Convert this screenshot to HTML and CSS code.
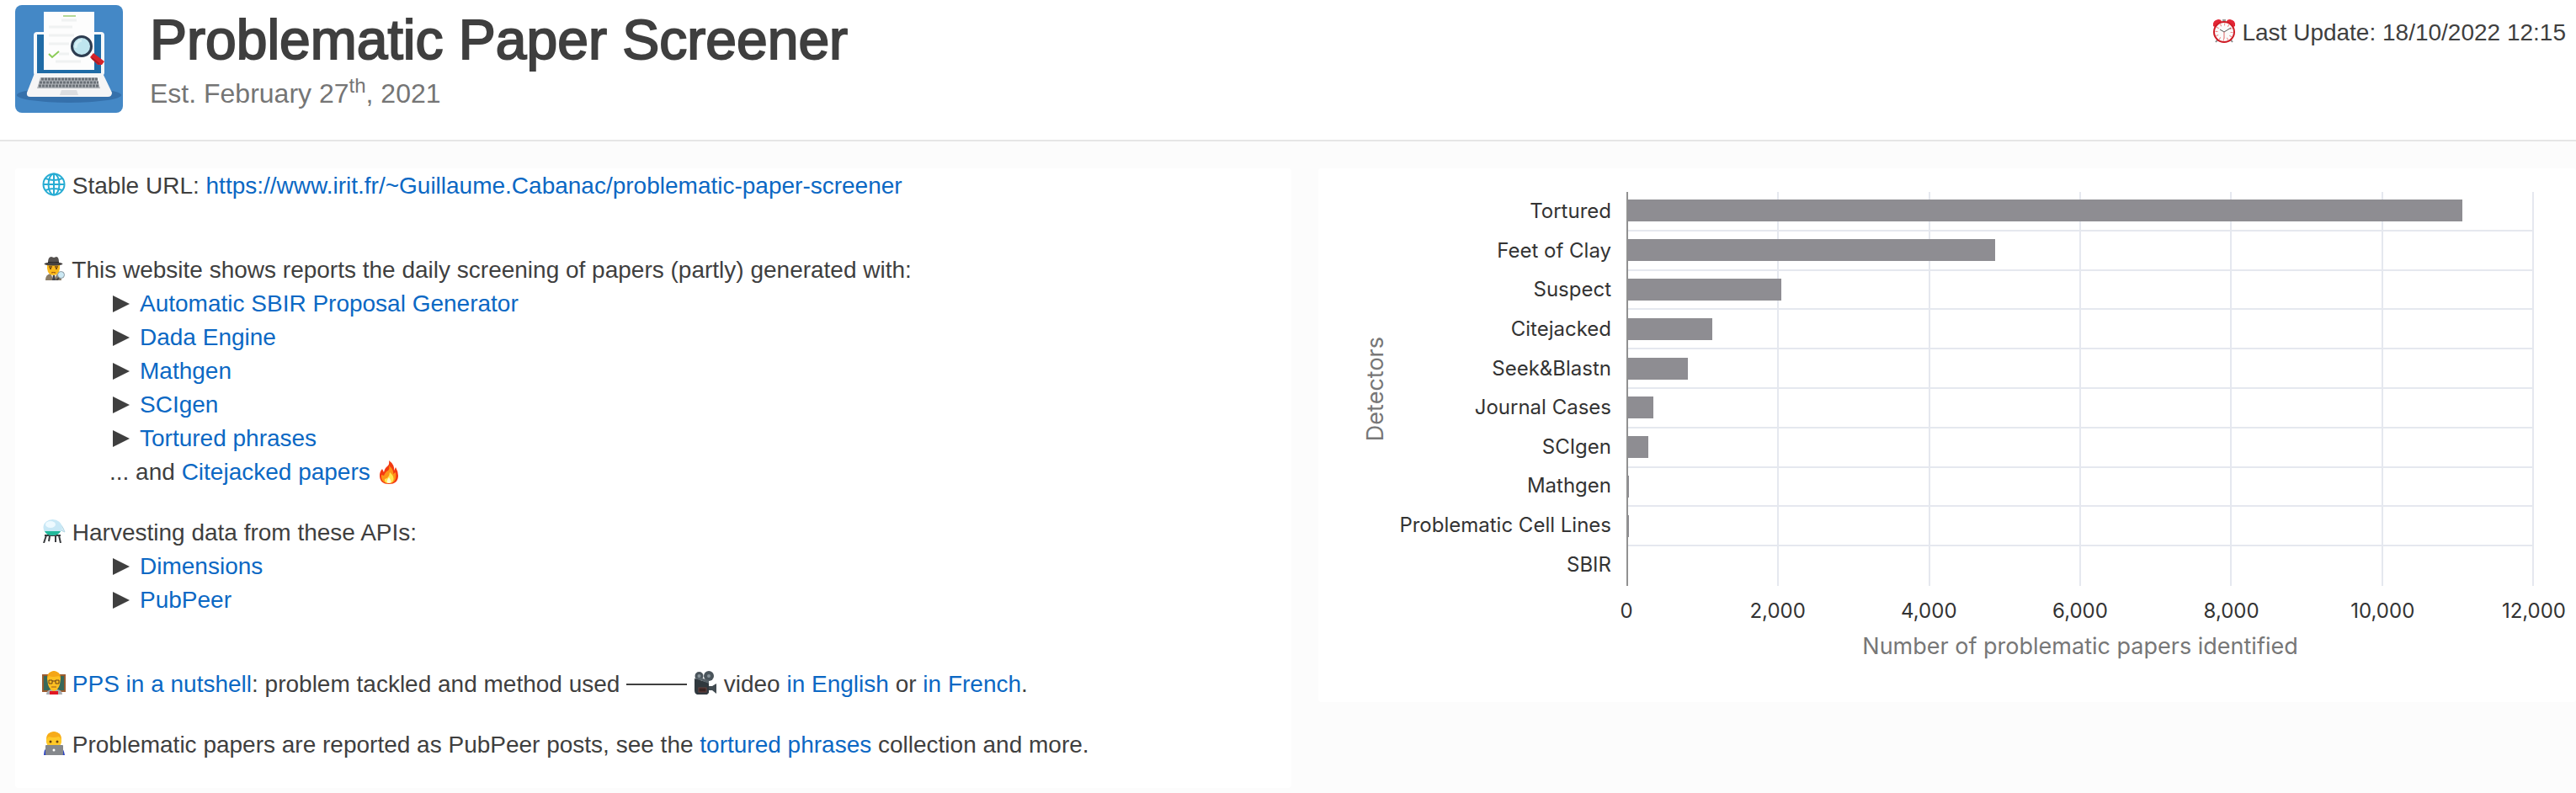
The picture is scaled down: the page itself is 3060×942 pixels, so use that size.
FILE: index.html
```html
<!DOCTYPE html>
<html lang="en">
<head>
<meta charset="utf-8">
<title>Problematic Paper Screener</title>
<link rel="stylesheet" href="styles.css">
</head>
<body>
<header class="masthead">
  <svg class="logo" viewBox="0 0 128 128" role="img" aria-label="Laptop with a screened paper">
    <rect width="128" height="128" fill="#4488c6"/>
    <ellipse cx="64" cy="107" rx="62" ry="9" fill="#3570ab"/>
    <rect x="22" y="32" width="84" height="52" rx="4" fill="#f6f8fa"/>
    <rect x="26" y="35" width="76" height="46" fill="#1f6ba6"/>
    <path d="M34 8H94V77H34Z" fill="#fdfdfd"/>
    <path d="M57 13h15" stroke="#b5d897" stroke-width="2"/>
    <path d="M55 18h18M40 26h28M40 36h30M40 46h24M52 58h12M48 67h30" stroke="#f0f2f2" stroke-width="3"/>
    <path d="M40 58l4 4 8-7" fill="none" stroke="#8ccc58" stroke-width="2"/>
    <path d="M23 81H104L115 104Q115 109 110 109H18Q13 109 14 104Z" fill="#f5f5f6"/>
    <path d="M30 86H97L101 99H26Z" fill="#b0b4b9"/>
    <path d="M31 88H98M29 92H99M28 96H100" stroke="#6b7178" stroke-width="3" stroke-dasharray="3 1"/>
    <path d="M55 101H73L75 107H53Z" fill="#dcdde0"/>
    <path d="M93 57L106 67 103 71H98L89 62Z" fill="#d5242b"/>
    <path d="M91 63l9 7" stroke="#a81d24" stroke-width="2"/>
    <circle cx="79" cy="49" r="11.500" fill="#bfe5ef" stroke="#2d3c50" stroke-width="3"/>
    <path d="M72 51a8 8 0 0 1 7-9" fill="none" stroke="#d6f0f6" stroke-width="3"/>
  </svg>
  <div class="masthead-text">
    <h1 class="title">Problematic Paper Screener</h1>
    <p class="subtitle">Est. February 27<sup>th</sup>, 2021</p>
  </div>
  <p class="updated">
    <svg class="icon" viewBox="0 0 28 28" aria-hidden="true">
      <path d="M8 22l-4 5M20 22l4 5" stroke="#8a8a8c" stroke-width="2"/>
      <path d="M1 8Q0 1 7 0 11 0 11 3L3 9ZM27 8Q28 1 21 0 17 0 17 3L25 9Z" fill="#e32636"/>
      <rect x="12" y="0" width="4" height="3" fill="#999"/>
      <circle cx="14" cy="15" r="12" fill="#fafafa" stroke="#cf1b25" stroke-width="2"/>
      <circle cx="14" cy="15" r="9" fill="none" stroke="#ee8585" stroke-width="3" stroke-dasharray="1 3.7"/>
      <path d="M9 12l5 3 8-5" fill="none" stroke="#555" stroke-width="1"/>
      <path d="M14 15v8" stroke="#d66" stroke-width="1"/>
    </svg>
    Last Update: 18/10/2022 12:15
  </p>
</header>

<main class="columns">
  <section class="card about">
    <p class="line">
      <svg class="icon" viewBox="0 0 28 28" aria-hidden="true">
        <g fill="none" stroke="#27acd3" stroke-width="2">
          <circle cx="14" cy="14" r="12.5"/><ellipse cx="14" cy="14" rx="6.5" ry="12.5"/>
          <path d="M14 1v26M1 14h26M4 7q10 4 20 0M4 21q10-4 20 0"/>
        </g>
      </svg>
      Stable URL: <a href="#">https://www.irit.fr/~Guillaume.Cabanac/problematic-paper-screener</a>
    </p>

    <div class="block">
      <p class="line">
        <svg class="icon" viewBox="0 0 28 28" aria-hidden="true">
          <path d="M4 28Q4 21 10 20H18Q23 21 23 28Z" fill="#8b7d68"/>
          <path d="M10 20l4 8 4-8z" fill="#f0f0f0"/><path d="M13 22h2l1 6h-4z" fill="#42434c"/>
          <path d="M6 9H21V14Q20 22 13.500 22 7 22 6 14Z" fill="#fbb91c"/>
          <path d="M8 12h4M15 12h4" stroke="#7b4a0f" stroke-width="1.500"/>
          <circle cx="10" cy="14" r="1" fill="#4d2e0e"/><circle cx="17" cy="14" r="1" fill="#4d2e0e"/>
          <path d="M11 19q2.500-1 5 0" stroke="#8b4712" fill="none"/>
          <path d="M7 7Q7 0 11 0L14 1 17 0Q20 0 20 7Z" fill="#55514f"/>
          <path d="M7 6h13v2H7z" fill="#242323"/>
          <ellipse cx="13.500" cy="8.500" rx="11" ry="2" fill="#454140"/>
          <circle cx="22.500" cy="21.500" r="4" fill="#cce9f4" stroke="#8a98a0"/>
          <path d="M20 25l-3 3" stroke="#444" stroke-width="2"/>
        </svg>
        This website shows reports the daily screening of papers (partly) generated with:
      </p>
      <ul class="links">
        <li><span class="arrow"></span><a href="#">Automatic SBIR Proposal Generator</a></li>
        <li><span class="arrow"></span><a href="#">Dada Engine</a></li>
        <li><span class="arrow"></span><a href="#">Mathgen</a></li>
        <li><span class="arrow"></span><a href="#">SCIgen</a></li>
        <li><span class="arrow"></span><a href="#">Tortured phrases</a></li>
        <li>... and&nbsp;<a href="#">Citejacked papers</a>&nbsp;<svg class="icon" viewBox="0 0 28 28" aria-hidden="true">
          <path d="M14 0Q21 5 20 12L22 8Q25 13 25 18 25 28 14 28 3 28 3 18 3 13 6 10L8 14Q9 9 12 7 15 5 14 0Z" fill="#f33a12"/>
          <path d="M14 6Q20 11 19 16L22 14Q24 27 14 27 4 27 5 17L8 18Q10 13 13 12Q15 10 14 6Z" fill="#fd9418"/>
          <path d="M15 14Q21 19 19 24 18 27 14 27 8 27 9 22L12 21Q15 18 15 14Z" fill="#ffe750"/>
          <path d="M14 20q5 7 0 7-5 0 0-7z" fill="#fffbd5"/>
        </svg></li>
      </ul>
    </div>

    <div class="block block-near">
      <p class="line">
        <svg class="icon" viewBox="0 0 28 28" aria-hidden="true">
          <path d="M3 19H22M5 19L2 28M20 19L22 28M9 20L8 26M16 20v7" stroke="#393b3e" stroke-width="2"/>
          <path d="M18 3Q24 6 27 15L20 12Z" fill="#d6edf5" stroke="#b5d7e4"/>
          <ellipse cx="12.500" cy="9.500" rx="11" ry="9.500" fill="#c8e8f6"/>
          <path d="M3 14H22Q20 19 12 19 5 19 3 14Z" fill="#22b99b"/>
          <ellipse cx="10" cy="6" rx="6" ry="4" fill="#eefaff"/>
        </svg>
        Harvesting data from these APIs:
      </p>
      <ul class="links">
        <li><span class="arrow"></span><a href="#">Dimensions</a></li>
        <li><span class="arrow"></span><a href="#">PubPeer</a></li>
      </ul>
    </div>

    <p class="line block">
      <svg class="icon" viewBox="0 0 28 28" aria-hidden="true">
        <rect x="1" y="5" width="26" height="19" fill="#37685a" stroke="#9b5b2e" stroke-width="2"/>
        <path d="M5 28Q5 23 11 22H18Q24 23 24 28Z" fill="#a9adb2"/>
        <path d="M9 24h10v4H9z" fill="#e01724"/>
        <path d="M6 9Q6 1 14 0 22 1 22 9L21 16Q19 23 14 24 9 23 7 16Z" fill="#fdbf22"/>
        <path d="M6 9Q6 1 14 0 22 1 22 9L20 6Q12 8 8 6Z" fill="#f4a516"/>
        <path d="M8 11h4v4H8zM16 11h4v4h-4zM12 12h4" fill="none" stroke="#684016"/>
        <path d="M11 19h6" stroke="#9b5917"/>
      </svg>
      <a href="#">PPS in a nutshell</a>: problem tackled and method used
      <span class="rule"></span>
      <svg class="icon" viewBox="0 0 28 28" aria-hidden="true">
        <circle cx="6.500" cy="6" r="5" fill="#4a545b"/><circle cx="18" cy="6" r="6" fill="#4a545b"/>
        <circle cx="6.500" cy="6" r="2" fill="#879299"/><circle cx="18" cy="6" r="2" fill="#879299"/>
        <path d="M1 9L18 14V26L16 28H4Q1 27 1 23Z" fill="#30383e"/>
        <path d="M1 8L18 15V11L8 8Z" fill="#59636a"/>
        <rect x="6" y="20" width="9" height="5" fill="#3a2524" stroke="#67413d"/>
        <path d="M18 18h4l5-3v12l-5-4h-4z" fill="#424b51"/>
      </svg>
      video <a href="#">in English</a> or <a href="#">in French</a>.
    </p>

    <p class="line block block-near">
      <svg class="icon" viewBox="0 0 28 28" aria-hidden="true">
        <path d="M2 28Q2 20 8 18H20Q26 20 27 28Z" fill="#2b43c3"/>
        <path d="M5 9Q5 1 14 0 23 1 23 9V13Q21 20 14 21 7 20 5 13Z" fill="#ffc928"/>
        <path d="M5 9Q5 1 14 0 23 1 23 9L20 6Q13 8 8 6Z" fill="#f7ab19"/>
        <circle cx="10" cy="12" r="1.500" fill="#68400f"/><circle cx="18" cy="12" r="1.500" fill="#68400f"/>
        <rect x="4" y="16" width="21" height="12" rx="1" fill="#85888c"/>
        <circle cx="14" cy="22" r="1.500" fill="#fff"/>
      </svg>
      Problematic papers are reported as PubPeer posts, see the <a href="#">tortured phrases</a> collection and more.
    </p>
  </section>

  <section class="card chart" aria-label="Number of problematic papers identified by detector">
    <div class="y-title"><span>Detectors</span></div>
    <div class="y-labels">
      <span>Tortured</span><span>Feet of Clay</span><span>Suspect</span><span>Citejacked</span><span>Seek&amp;Blastn</span><span>Journal Cases</span><span>SCIgen</span><span>Mathgen</span><span>Problematic Cell Lines</span><span>SBIR</span>
    </div>
    <div class="plot">
      <div class="grid-columns"><i></i><i></i><i></i><i></i><i></i><i></i></div>
      <div class="rows">
        <div class="row"><div class="bar" style="width:92.1%"></div></div>
        <div class="row"><div class="bar" style="width:40.5%"></div></div>
        <div class="row"><div class="bar" style="width:16.9%"></div></div>
        <div class="row"><div class="bar" style="width:9.3%"></div></div>
        <div class="row"><div class="bar" style="width:6.6%"></div></div>
        <div class="row"><div class="bar" style="width:2.8%"></div></div>
        <div class="row"><div class="bar" style="width:2.2%"></div></div>
        <div class="row"><div class="bar" style="width:0.1%"></div></div>
        <div class="row"><div class="bar" style="width:0.1%"></div></div>
        <div class="row"><div class="bar" style="width:0%"></div></div>
      </div>
    </div>
    <div class="x-labels"><span>0</span><span>2,000</span><span>4,000</span><span>6,000</span><span>8,000</span><span>10,000</span><span>12,000</span></div>
    <div class="x-title">Number of problematic papers identified</div>
  </section>
</main>
</body>
</html>
```
FILE: styles.css
```css
* { box-sizing: border-box; }

body {
  margin: 0;
  background: #fcfcfc;
  color: #3f3f3f;
  font-family: "Liberation Sans", Arial, sans-serif;
  font-size: 28px;
  line-height: 40px;
}

h1, p, ul { margin: 0; padding: 0; font-weight: 400; }

a { color: #0b68c4; text-decoration: none; }

.masthead {
  display: flex;
  align-items: flex-start;
  gap: 32px;
  padding: 6px 12px 32px 18px;
  background: #fff;
  border-bottom: 2px solid #e6e6e6;
}

.logo { flex: none; width: 128px; height: 128px; border-radius: 8px; }

.masthead-text { flex: 1; }

.title {
  font-size: 66px;
  line-height: 82px;
  -webkit-text-stroke: 2px #3f3f3f;
}

.subtitle { color: #757575; font-size: 32px; line-height: 46px; }
.subtitle sup { font-size: 24px; line-height: 0; }

.updated { padding-top: 13px; white-space: nowrap; }

.icon { width: 28px; height: 28px; vertical-align: -3px; }

.columns {
  display: grid;
  grid-template-columns: 1516fr 1494fr;
  align-items: start;
  gap: 32px;
  padding: 32px 0 6px 18px;
}

.card { background: #fff; border-radius: 4px; }

.about { padding: 1px 32px 31px; }

.block { margin-top: 60px; }
.block-near { margin-top: 32px; }

.links { padding-left: 80px; list-style: none; }
.links li { display: flex; align-items: center; }

.arrow {
  margin: 0 12px 0 4px;
  border-left: 20px solid #3f3f3f;
  border-top: 10px solid transparent;
  border-bottom: 10px solid transparent;
}

.rule {
  display: inline-block;
  width: 72px;
  border-top: 2px solid #3f3f3f;
  vertical-align: 8px;
}

.chart {
  display: grid;
  grid-template-columns: 40px minmax(260px, 278fr) minmax(0, 1078fr);
  padding: 28px 50px 46px 48px;
  font-family: Inter, sans-serif;
  font-size: 24px;
}

.y-title {
  display: flex;
  align-items: center;
  justify-content: center;
  color: #777;
  font-size: 27px;
}
.y-title span { writing-mode: vertical-rl; transform: rotate(180deg); }

.y-labels {
  display: grid;
  grid-auto-rows: 1fr;
  align-items: center;
  padding: 0 18px 2px 0;
  color: #333;
  text-align: right;
}

.plot {
  display: grid;
  height: 468px;
  border-left: 2px solid #919191;
}
.grid-columns, .rows { grid-area: 1 / 1; display: grid; }
.grid-columns { grid-template-columns: repeat(6, 1fr); }
.grid-columns i { border-right: 2px solid #e5e8ef; }
.rows { grid-auto-rows: 1fr; }
.row { display: flex; align-items: center; border-bottom: 2px solid #e5e8ef; }
.row:last-child { border-bottom: 0; }
.bar { height: 26px; background: #8e8d92; }

.x-labels {
  grid-column: 3;
  display: flex;
  justify-content: space-between;
  padding-top: 10px;
  color: #333;
}
.x-labels span { display: flex; justify-content: center; width: 0; white-space: nowrap; }

.x-title {
  grid-column: 3;
  padding-top: 2px;
  color: #777;
  font-size: 27px;
  text-align: center;
}
```
